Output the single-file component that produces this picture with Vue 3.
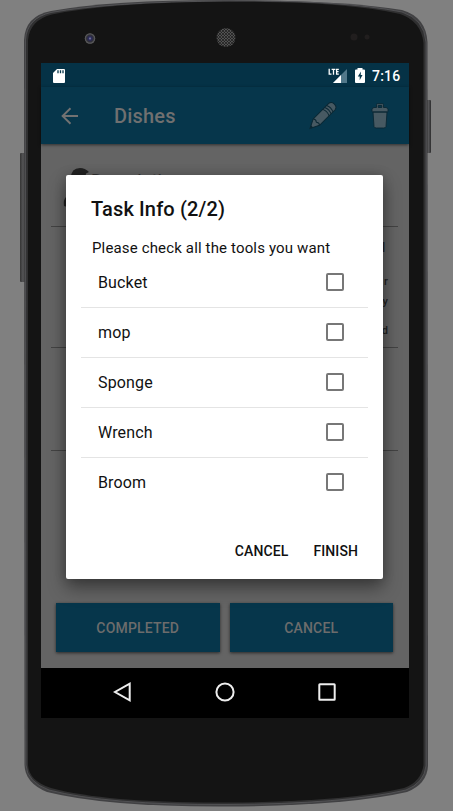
<script setup>
const tools = ['Bucket', 'mop', 'Sponge', 'Wrench', 'Broom']
const detailTails = ['l', 'r', 'y', 'd']
</script>

<template>
  <div class="stage">
    <svg class="device" viewBox="0 0 453 811" aria-hidden="true">
      <defs>
        <linearGradient id="key" x1="0" x2="1" y1="0" y2="0">
          <stop offset="0" stop-color="#343434" />
          <stop offset=".5" stop-color="#555557" />
          <stop offset="1" stop-color="#2c2c2d" />
        </linearGradient>
        <radialGradient id="lens">
          <stop offset="0" stop-color="#8d8da8" />
          <stop offset=".3" stop-color="#29295c" />
          <stop offset=".65" stop-color="#303038" />
          <stop offset="1" stop-color="#6a6a6a" />
        </radialGradient>
        <pattern id="mesh" width="3" height="3" patternUnits="userSpaceOnUse">
          <rect width="3" height="3" fill="#555" />
          <circle cx="1" cy="1" r=".9" fill="#171717" />
          <circle cx="2.6" cy="2.6" r=".8" fill="#202020" />
        </pattern>
      </defs>
      <rect x="20" y="153" width="6" height="129" rx="1" fill="url(#key)" />
      <rect x="426" y="100" width="5" height="53" rx="1" fill="url(#key)" />
      <path d="M24 40Q25 16 51 11Q110 0 226 0T402 10Q426 17 427.500 42L428 766Q427 784 407 792Q345 806 226 806.500T47 792Q25 783 24.500 765Z" fill="#414143" />
      <path d="M25.500 40Q27 18 51 12.500Q110 2 226 1T402 12Q424 19 426 42V766Q424 783 406 790Q345 804 226 804.500T49 790Q27 782 26 765Z" fill="#303031" stroke="#626264" stroke-width=".6" />
      <path d="M28 40Q30 20 52 14.500Q110 2.500 226 1.800T400 14Q421 21 423.500 43V765Q421 782 404 788Q345 802 226 802.500T51 788Q29 781 28 765Z" fill="#141414" />
      <circle cx="90" cy="38.500" r="5.200" fill="url(#lens)" />
      <circle cx="226" cy="37.500" r="9.500" fill="url(#mesh)" />
      <circle cx="354" cy="37" r="3.500" fill="#211e1e" />
      <circle cx="367" cy="37" r="2.500" fill="#211e1e" />
    </svg>

    <main class="screen">
      <div class="status">
        <svg class="sd" viewBox="0 0 12 14"><path d="M4 0h7q1 0 1 1v12q0 1-1 1H1q-1 0-1-1V4z" fill="#fff" /><path d="M5 1.200v3M7.500 1.200v3M10 1.200v3" stroke="#06364a" stroke-width="1.300" /></svg>
        <svg class="signal" viewBox="0 0 20 15"><path d="M19 1v14H5z" fill="#52788a" /><path d="M13 7v8H5z" fill="#fff" /><path d="M1.200.8v5.400h2.300M3.600 1.300h3.800M5.500 1.300v5.400M10.800 1.300H8.600v4.900h2.200M8.600 3.700h2" fill="none" stroke="#fff" stroke-width="1.300" /></svg>
        <svg class="battery" viewBox="0 0 10 15"><path d="M2.500 1.500V0h5v1.500H9q1 0 1 1V14q0 1-1 1H1q-1 0-1-1V2.500q0-1 1-1z" fill="#fff" /><path d="M6 3.500 2.800 8.500h1.900v3.700L7.500 7H5.700z" fill="#06364a" /></svg>
        <span class="clock">7:16</span>
      </div>
      <header class="appbar">
        <svg class="back" viewBox="0 0 18 18"><path d="M17 9H2M9.500 1.300 1.600 9l7.900 7.700" fill="none" stroke="#727272" stroke-width="1.900" /></svg>
        <h1>Dishes</h1>
        <svg class="pencil" viewBox="0 0 28 28">
          <g transform="translate(1 26.500) rotate(-45)" fill="#475962" stroke="#0a2733" stroke-width="1">
            <path d="M0 0 9-4.500H31q3.500.5 3.500 4.500T31 4.500H9z" />
            <path d="M9-4.500q2 2.200 0 4.500 2 2.200 0 4.500M22.500-4.500q2 4.500 0 9M25.300-4.500q2 4.500 0 9M28-4.500q2 4.500 0 9" fill="none" />
            <path d="M0 0 3-1.500v3z" fill="#0a2733" stroke="none" />
          </g>
        </svg>
        <svg class="trash" viewBox="0 0 18 26"><path d="M2 9h14l-1 14.500q-.3 1.500-2.300 1.500H5.300q-2 0-2.300-1.500zM1 8V6.500Q1 5 3 4.500h2.500V1.500q0-.8 1-.8h5q1 0 1 .8v3H15q2 .5 2 2V8q0 1-1 1H2q-1 0-1-1zM7.200 2.500v2h3.600v-2z" fill="#475962" fill-rule="evenodd" stroke="#0a2733" stroke-width=".9" /></svg>
      </header>
      <section class="content">
        <div class="summary">
          <svg class="avatar" viewBox="0 0 36 50"><path d="M8 10Q8 0 17 0q5 0 9 4l-3 1.500L22 12H12zM3 29q-3 3-2 9l10 3V27z" fill="#222" /></svg>
          <span>Description</span>
        </div>
        <div class="details"><span v-for="tail in detailTails" :key="tail">{{ tail }}</span></div>
        <div class="blank"></div>
        <div class="actions"><button>COMPLETED</button><button>CANCEL</button></div>
      </section>
      <nav class="navbar">
        <svg viewBox="0 0 20 20"><path d="M16.700 1.700v16.600L2 10z" /></svg>
        <svg viewBox="0 0 20 20"><circle cx="10" cy="10" r="8.600" /></svg>
        <svg viewBox="0 0 20 20"><rect x="2.300" y="2.300" width="15.400" height="15.400" rx=".5" /></svg>
      </nav>
    </main>

    <div class="dialog" role="dialog">
      <h2>Task Info (2/2)</h2>
      <p>Please check all the tools you want</p>
      <ul>
        <li v-for="tool in tools" :key="tool"><span>{{ tool }}</span><i class="box"></i></li>
      </ul>
      <footer><button>CANCEL</button><button>FINISH</button></footer>
    </div>
  </div>
</template>

<style>
body { margin: 0; background: #808080; }
</style>

<style scoped>
* { box-sizing: border-box; }
.stage { position: relative; width: 453px; height: 811px; overflow: hidden; padding: 63px 44px 0 41px; background: #808080; font-family: Roboto, sans-serif; }
svg { display: block; flex: none; }
.device { position: absolute; inset: 0; width: 453px; height: 811px; }
h1, h2, p, ul { margin: 0; padding: 0; }
button { border: 0; padding: 0; background: none; font: 500 14px/20px Roboto, sans-serif; }
.screen { position: relative; width: 368px; height: 655px; display: flex; flex-direction: column; background: #646464; }
.status { height: 24px; flex: none; display: flex; align-items: center; background: #053246; padding: 1px 9px 0 12px; }
.sd { width: 12px; height: 14px; margin-right: auto; }
.signal { width: 20px; height: 15px; margin-right: 7px; }
.battery { width: 10px; height: 15px; margin-right: 7px; }
.clock { color: #fff; font-size: 14px; font-weight: 500; letter-spacing: .2px; width: 28px; white-space: nowrap; }
.appbar { position: relative; height: 57px; flex: none; display: flex; align-items: center; padding: 0 20px 0 20px; background: #06364b; box-shadow: 0 1px 3px #0008; }
.back { width: 18px; height: 18px; margin-right: 35px; }
h1 { margin-right: auto; padding-top: 1px; font-size: 20px; font-weight: 500; line-height: 24px; letter-spacing: .2px; color: #707070; }
.pencil { width: 28px; height: 28px; margin-right: 34px; }
.trash { width: 18px; height: 26px; }
.content { flex: 1; display: flex; flex-direction: column; padding: 0 11px 0 10px; }
.summary { display: flex; height: 83px; padding: 24px 0 0 12px; border-bottom: 1px solid #434343; color: #333; font-size: 18px; line-height: 24px; }
.summary span { padding-top: 1px; margin-left: -8px; }
.avatar { width: 36px; height: 50px; }
.details { height: 121px; padding: 11px 10px 0 0; display: grid; grid-template-rows: 34px 20px 29px 20px; justify-items: end; border-bottom: 1px solid #434343; color: #222; font-size: 11px; font-weight: 500; line-height: 20px; }
.details span:first-child { margin-right: 3px; font-size: 12px; }
.blank { height: 103px; border-bottom: 1px solid #434343; }
.actions { display: flex; gap: 10px; margin-top: auto; padding: 0 5px 16px; }
.actions button { flex: 1; height: 49px; padding-top: 1px; background: #06364b; color: #6c6c6c; letter-spacing: .18px; box-shadow: 0 1px 3px #0009; }
.navbar { height: 50px; flex: none; display: flex; align-items: center; justify-content: center; gap: 82px; padding-bottom: 2px; background: #000; }
.navbar svg { width: 20px; height: 20px; fill: none; stroke: #eee; stroke-width: 2; }
.dialog { position: absolute; left: 66px; top: 175px; width: 317px; height: 404px; padding: 22px 15px 0; display: flex; flex-direction: column; background: #fff; border-radius: 2px; box-shadow: 0 9px 18px #0006, 0 0 12px #0003; color: #111; clip-path: inset(-40px -26px -70px -25px); }
h2 { margin-left: 10px; font-size: 20px; line-height: 25px; font-weight: 500; letter-spacing: .14px; white-space: nowrap; }
p { margin: 16px 0 0 11px; font-size: 15px; line-height: 20px; letter-spacing: .15px; white-space: nowrap; }
ul { list-style: none; }
li { height: 50px; display: flex; align-items: center; justify-content: space-between; padding: 0 24px 1px 17px; font-size: 16px; letter-spacing: .14px; border-bottom: 1px solid #e4e4e4; }
li:last-child { border: 0; padding-bottom: 2px; }
.box { width: 18px; height: 18px; border: 2px solid #777; border-radius: 2px; }
footer { display: flex; justify-content: flex-end; gap: 25px; margin-top: 33px; padding-right: 10px; }
footer button { color: #111; letter-spacing: .1px; }
</style>
